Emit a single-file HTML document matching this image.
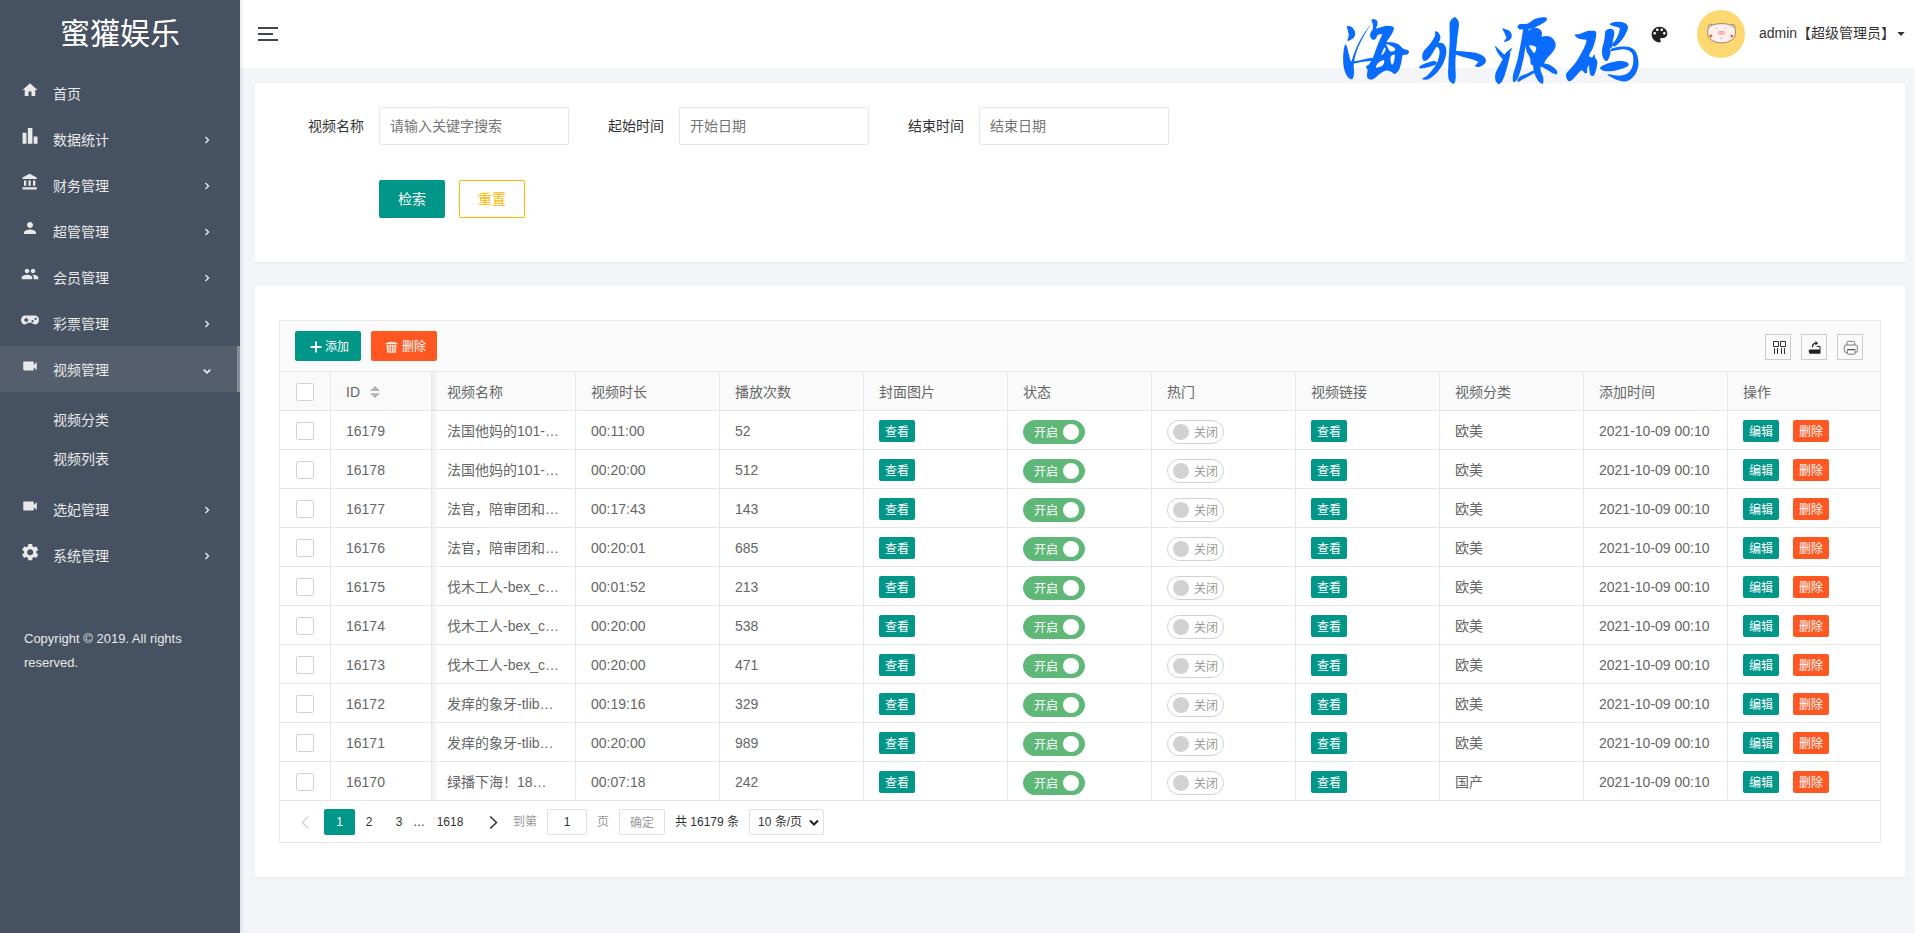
<!DOCTYPE html><html lang="zh-CN"><head><meta charset="utf-8"><title>视频列表</title><style>
*{box-sizing:border-box}
html,body{margin:0;padding:0}
body{width:1915px;height:933px;overflow:hidden;background:#f4f5f9;font-family:"Liberation Sans",sans-serif;font-size:14px;color:#333;position:relative}
.abs{position:absolute}
#side{position:absolute;left:0;top:0;width:240px;height:933px;background:#465161;color:#e9e9e9;box-shadow:1px 0 4px rgba(0,0,0,.12);z-index:2}
#logo{position:absolute;left:0;top:12px;width:240px;height:44px;line-height:44px;text-align:center;font-size:30px;color:#fff}
.mi{position:absolute;left:0;width:240px;height:46px;line-height:46px;font-size:14px}
.mi.on{background:#555e6d;border-right:3px solid #878e9a}
.mi .ic{position:absolute;left:21px;top:11px;width:18px;height:18px;fill:#e9e9e9}
.mi .tx{position:absolute;left:53px;top:1px}
.mi .ar{position:absolute;left:203px;top:20px;width:8px;height:8px}
.sub{position:absolute;left:53px;height:39px;line-height:39px;font-size:14px}
#copy{position:absolute;left:24px;top:627px;font-size:13px;line-height:24px;width:200px;color:#e9e9e9}
#head{position:absolute;left:240px;top:0;width:1675px;height:68px;background:#fff}
.card{position:absolute;left:255px;width:1650px;background:#fff;box-shadow:0 1px 2px rgba(0,0,0,.06)}
.lbl{position:absolute;top:107px;width:100px;height:38px;line-height:38px;text-align:right;color:#333}
.inp{position:absolute;top:107px;width:190px;height:38px;line-height:36px;border:1px solid #e6e6e6;border-radius:2px;padding-left:10px;color:#757575;background:#fff}
.btn{position:absolute;height:38px;line-height:39px;text-align:center;border-radius:2px;font-size:14px}

.tb{position:absolute;top:331px;width:66px;height:30px;line-height:30px;border-radius:2px;color:#fff;font-size:12px}
.tool{position:absolute;top:334px;width:26px;height:26px;border:1px solid #ccc;background:#fafafa}
.th{position:absolute;top:372px;height:38px;line-height:40px;color:#666;font-size:14px;white-space:nowrap}
.cb{position:absolute;left:296px;width:18px;height:18px;border:1px solid #d2d2d2;border-radius:2px;background:#fff}
.tr{position:absolute;left:279px;width:1602px;height:39px;border-bottom:1px solid #e8e8e8;color:#666}
.td{position:absolute;top:0;height:38px;line-height:40px;white-space:nowrap}
.bd{position:absolute;top:9px;width:36px;height:22px;line-height:25px;text-align:center;background:#009688;color:#fff;font-size:12px;border-radius:2px}
.sw{position:absolute;top:9px;height:24px;border-radius:12px;font-size:12px;line-height:24px}
.sw i{font-style:normal;position:absolute;top:0}
.sw b{position:absolute;top:3px;width:16px;height:16px;border-radius:8px}
.sw.on{width:62px;background:#5fb878;border:1px solid #5fb878;color:#fff}
.sw.on i{left:10px}.sw.on b{left:39px;background:#fff}
.sw.off{width:57px;background:#fff;border:1px solid #d2d2d2;color:#999}
.sw.off i{left:26px}.sw.off b{left:5px;background:#d2d2d2}
.pg{position:absolute;top:809px;height:26px;line-height:26px;font-size:12px;text-align:center;color:#333;white-space:nowrap}
.pg.bx{border:1px solid #e2e2e2;border-radius:2px;line-height:24px;background:#fff}
</style></head><body>
<div id="side"><div id="logo">蜜獾娱乐</div>
<div class="mi" style="top:70px"><svg class="ic" viewBox="0 0 24 24"><path d="M10 20v-6h4v6h5v-8h3L12 3 2 12h3v8z"/></svg><span class="tx">首页</span></div>
<div class="mi" style="top:116px"><svg class="ic" viewBox="0 0 24 24"><path d="M2.100 7.600h5.200v14.700H2.100zM9.100 1.300h6.100v21H9.100zM16.900 12.700H22v9.600h-5.100z"/></svg><span class="tx">数据统计</span><svg class="ar" viewBox="0 0 8 8"><path d="M2.500 1l3 3-3 3" fill="none" stroke="#e9e9e9" stroke-width="1.400"/></svg></div>
<div class="mi" style="top:162px"><svg class="ic" viewBox="0 0 24 24"><path d="M4 10v7h3v-7H4zm6 0v7h3v-7h-3zM2 22h19v-3H2v3zm14-12v7h3v-7h-3zm-4.500-9L2 6v2h19V6l-9.500-5z"/></svg><span class="tx">财务管理</span><svg class="ar" viewBox="0 0 8 8"><path d="M2.500 1l3 3-3 3" fill="none" stroke="#e9e9e9" stroke-width="1.400"/></svg></div>
<div class="mi" style="top:208px"><svg class="ic" viewBox="0 0 24 24"><path d="M12 12c2.210 0 4-1.790 4-4s-1.790-4-4-4-4 1.790-4 4 1.790 4 4 4zm0 2c-2.670 0-8 1.340-8 4v2h16v-2c0-2.660-5.330-4-8-4z"/></svg><span class="tx">超管管理</span><svg class="ar" viewBox="0 0 8 8"><path d="M2.500 1l3 3-3 3" fill="none" stroke="#e9e9e9" stroke-width="1.400"/></svg></div>
<div class="mi" style="top:254px"><svg class="ic" viewBox="0 0 24 24"><path d="M16 11c1.660 0 2.990-1.340 2.990-3S17.660 5 16 5c-1.660 0-3 1.340-3 3s1.340 3 3 3zm-8 0c1.660 0 2.990-1.340 2.990-3S9.660 5 8 5C6.340 5 5 6.340 5 8s1.340 3 3 3zm0 2c-2.330 0-7 1.170-7 3.500V19h14v-2.500c0-2.330-4.670-3.500-7-3.500zm8 0c-.290 0-.620.020-.970.050 1.160.840 1.970 1.970 1.970 3.450V19h6v-2.500c0-2.330-4.670-3.500-7-3.500z"/></svg><span class="tx">会员管理</span><svg class="ar" viewBox="0 0 8 8"><path d="M2.500 1l3 3-3 3" fill="none" stroke="#e9e9e9" stroke-width="1.400"/></svg></div>
<div class="mi" style="top:300px"><svg class="ic" viewBox="0 0 24 24"><path fill-rule="evenodd" d="M5.500 6h13c3 0 5.500 2.600 5.500 6s-2.300 6-5 6c-1.800 0-3.200-.900-4.100-2.200h-5.800C8.200 17.100 6.800 18 5 18c-2.700 0-5-2.600-5-6s2.500-6 5.500-6zM6 9v2H4v2h2v2h2v-2h2v-2H8V9zm9.500 3a1.500 1.500 0 1 0 0 3 1.500 1.500 0 0 0 0-3zm4-3a1.500 1.500 0 1 0 0 3 1.500 1.500 0 0 0 0-3z"/></svg><span class="tx">彩票管理</span><svg class="ar" viewBox="0 0 8 8"><path d="M2.500 1l3 3-3 3" fill="none" stroke="#e9e9e9" stroke-width="1.400"/></svg></div>
<div class="mi on" style="top:346px"><svg class="ic" viewBox="0 0 24 24"><path d="M17 10.500V7c0-.550-.450-1-1-1H4c-.550 0-1 .450-1 1v10c0 .550.450 1 1 1h12c.550 0 1-.450 1-1v-3.500l4 4v-11l-4 4z"/></svg><span class="tx">视频管理</span><svg class="ar" viewBox="0 0 8 8" style="top:20.500px"><path d="M.700 2.600l3.300 3.200 3.300-3.200" fill="none" stroke="#efefef" stroke-width="1.600"/></svg></div>
<div class="mi" style="top:486px"><svg class="ic" viewBox="0 0 24 24"><path d="M17 10.500V7c0-.550-.450-1-1-1H4c-.550 0-1 .450-1 1v10c0 .550.450 1 1 1h12c.550 0 1-.450 1-1v-3.500l4 4v-11l-4 4z"/></svg><span class="tx">选妃管理</span><svg class="ar" viewBox="0 0 8 8"><path d="M2.500 1l3 3-3 3" fill="none" stroke="#e9e9e9" stroke-width="1.400"/></svg></div>
<div class="mi" style="top:532px"><svg class="ic" style="left:19.800px;top:10.100px;width:20.400px;height:20.400px" viewBox="0 0 24 24"><path d="M19.140 12.940c.040-.300.060-.610.060-.940 0-.320-.020-.640-.070-.940l2.030-1.580c.180-.140.230-.410.120-.610l-1.920-3.320c-.120-.220-.370-.290-.590-.220l-2.390.960c-.500-.380-1.030-.700-1.620-.940l-.360-2.540c-.040-.240-.240-.410-.480-.410h-3.840c-.240 0-.430.170-.470.410l-.360 2.540c-.590.240-1.130.570-1.620.940l-2.390-.960c-.220-.080-.470 0-.590.220L2.740 8.870c-.120.210-.080.470.120.610l2.030 1.580c-.050.300-.090.630-.090.940s.020.640.070.940l-2.030 1.580c-.180.140-.230.410-.120.610l1.920 3.320c.120.220.370.290.590.220l2.390-.960c.500.380 1.030.700 1.620.940l.360 2.540c.050.240.240.410.480.410h3.840c.240 0 .440-.170.470-.410l.360-2.540c.590-.240 1.130-.560 1.620-.940l2.390.960c.220.080.470 0 .590-.220l1.920-3.320c.120-.220.070-.470-.120-.610l-2.010-1.580zM12 15.600c-1.980 0-3.600-1.620-3.600-3.600s1.620-3.600 3.600-3.600 3.600 1.620 3.600 3.600-1.620 3.600-3.600 3.600z"/></svg><span class="tx">系统管理</span><svg class="ar" viewBox="0 0 8 8"><path d="M2.500 1l3 3-3 3" fill="none" stroke="#e9e9e9" stroke-width="1.400"/></svg></div>
<div class="sub" style="top:401px">视频分类</div><div class="sub" style="top:440px">视频列表</div>
<div id="copy">Copyright © 2019. All rights<br>reserved.</div></div>
<div id="head">
<svg class="abs" style="left:18px;top:26px" width="20" height="16" viewBox="0 0 20 16"><path d="M0 2h20M0 8h15M0 14h20" stroke="#3f4652" stroke-width="2" fill="none"/></svg>
<svg class="abs" style="left:1409px;top:24px" width="21" height="21" viewBox="0 0 24 24"><path fill="#222" d="M12 3c-4.970 0-9 4.030-9 9s4.030 9 9 9c.830 0 1.500-.670 1.500-1.500 0-.390-.150-.740-.390-1.010-.230-.260-.380-.610-.380-.990 0-.830.670-1.500 1.500-1.500H16c2.760 0 5-2.240 5-5 0-4.420-4.030-8-9-8zm-5.500 9c-.830 0-1.500-.670-1.500-1.500S5.670 9 6.500 9 8 9.670 8 10.500 7.330 12 6.500 12zm3-4C8.670 8 8 7.330 8 6.500S8.670 5 9.500 5s1.500.670 1.500 1.500S10.330 8 9.500 8zm5 0c-.830 0-1.500-.670-1.500-1.500S13.670 5 14.500 5s1.500.670 1.500 1.500S15.330 8 14.500 8zm3 4c-.830 0-1.500-.670-1.500-1.500S16.670 9 17.500 9s1.500.670 1.500 1.500-.670 1.500-1.500 1.500z"/></svg>
<svg class="abs" style="left:1457px;top:10px" width="48" height="48" viewBox="0 0 48 48"><circle cx="24" cy="24" r="24" fill="#fdd76f"/><circle cx="13.300" cy="16.400" r="2.100" fill="#fcdcd8" stroke="#5c4a3c" stroke-width=".500"/><circle cx="36" cy="16.400" r="2.100" fill="#fcdcd8" stroke="#5c4a3c" stroke-width=".500"/><path d="M10.600 22.500C10.400 16.500 14 14 24.600 13.600 35 14 38.700 16.500 38.500 22.500 38.500 29.500 32 32.800 24.600 32.800 17 32.800 10.600 29.500 10.600 22.500Z" fill="#fcefed" stroke="#5c4a3c" stroke-width=".600"/><rect x="20.800" y="20.900" width="7.200" height="4" rx="2" fill="#f7b9b7"/><path d="M22.300 21.300h4.200" stroke="#c99" stroke-width=".500"/><circle cx="19.400" cy="18" r=".450" fill="#6b5a4a"/><circle cx="28.400" cy="18" r=".450" fill="#6b5a4a"/><circle cx="13.900" cy="26" r="1.450" fill="#ff5a2c"/><circle cx="34.800" cy="26.100" r="1.450" fill="#ff5a2c"/><path d="M23.800 27.600q.800 .300 .500 1.700" fill="none" stroke="#6b5a4a" stroke-width=".500"/></svg>
<div class="abs" style="left:1519px;top:19px;height:28px;line-height:28px;font-size:14px;color:#333;white-space:nowrap">admin【超级管理员】</div>
<svg class="abs" style="left:1657px;top:32px" width="8" height="4" viewBox="0 0 8 4"><path d="M.300 0h7.400L4 4z" fill="#333"/></svg>
</div>
<div class="card" style="top:83px;height:179px"></div>
<div class="lbl" style="left:264px">视频名称</div><div class="inp" style="left:379px">请输入关键字搜索</div>
<div class="lbl" style="left:564px">起始时间</div><div class="inp" style="left:679px">开始日期</div>
<div class="lbl" style="left:864px">结束时间</div><div class="inp" style="left:979px">结束日期</div>
<div class="btn" style="left:379px;top:180px;width:66px;background:#009688;color:#fff">检索</div>
<div class="btn" style="left:459px;top:180px;width:66px;border:1px solid #ffb800;color:#ffb800;line-height:37px;background:#fff">重置</div>
<div class="card" style="top:286px;height:591px"></div>
<div class="abs" style="left:279px;top:320px;width:1602px;height:523px;border:1px solid #e8e8e8;background:#fff"></div>
<div class="abs" style="left:280px;top:321px;width:1600px;height:51px;background:#fafafa;border-bottom:1px solid #e8e8e8"></div>
<div class="abs" style="left:280px;top:372px;width:1600px;height:39px;background:#fafafa;border-bottom:1px solid #e8e8e8"></div>
<div class="tb" style="left:295px;background:#009688"><svg width="12" height="12" viewBox="0 0 12 12" style="position:absolute;left:15px;top:10px"><path d="M6 .500v11M.500 6h11" stroke="#fff" stroke-width="1.800"/></svg><span style="position:absolute;left:30px;top:1px">添加</span></div>
<div class="tb" style="left:371px;background:#ff5722"><svg width="13" height="12" viewBox="0 0 13 12" style="position:absolute;left:14px;top:10px"><path d="M.300 3.300Q.300 1.800 3 1.300 6.500 .100 10 1.300 12.700 1.800 12.700 3.300z" fill="#ffe4d6"/><path d="M1.500 4h10l-.700 7.700H2.200z" fill="#ffe4d6"/><path d="M4.100 4.800v5.900M6.500 4.800v5.900M8.900 4.800v5.900" stroke="#ff5722" stroke-width=".800"/></svg><span style="position:absolute;left:31px;top:1px">删除</span></div>
<div class="tool" style="left:1765px"><svg width="24" height="24" viewBox="0 0 24 24" style="position:absolute;left:0;top:0"><path d="M7.500 6.500h5v5h-5zM14.500 6.500h5v5h-5z" fill="none" stroke="#333" stroke-width="1"/><path d="M8.500 13v6M11.500 13v6M15.500 13v6M18.500 13v6" stroke="#333" stroke-width="1"/></svg></div>
<div class="tool" style="left:1801px"><svg width="24" height="24" viewBox="0 0 24 24" style="position:absolute;left:0;top:0"><path d="M6.500 15.200l1.600-.800h8.800l1.600.600v3.800H7.500z" fill="#222"/><path d="M14.600 11.400H18V15" fill="none" stroke="#222" stroke-width="1"/><path d="M10.500 12.300Q10.400 8.400 13.800 8.200" fill="none" stroke="#222" stroke-width="1.300"/><path d="M13.300 6l2.800 2.200-2.800 2.200z" fill="#222"/></svg></div>
<div class="tool" style="left:1837px"><svg width="24" height="24" viewBox="0 0 24 24" style="position:absolute;left:0;top:0"><path d="M8.900 10V7.700c0-.800.600-1.400 1.400-1.400h5c.800 0 1.400.600 1.400 1.400V10" fill="none" stroke="#777" stroke-width="1"/><rect x="6.300" y="10" width="13.100" height="7.600" rx="2.200" fill="none" stroke="#777" stroke-width="1"/><path d="M8.600 10.500h8.600" stroke="#bbb" stroke-width="1"/><rect x="9.300" y="14.600" width="7.900" height="4.600" rx="1" fill="#fafafa" stroke="#777" stroke-width="1"/><path d="M9.300 14.600h7.900" stroke="#555" stroke-width="1.200"/></svg></div>
<div class="abs" style="left:330px;top:372px;width:1px;height:429px;background:#e8e8e8"></div>
<div class="abs" style="left:431px;top:372px;width:1px;height:429px;background:#e8e8e8"></div>
<div class="abs" style="left:575px;top:372px;width:1px;height:429px;background:#e8e8e8"></div>
<div class="abs" style="left:719px;top:372px;width:1px;height:429px;background:#e8e8e8"></div>
<div class="abs" style="left:863px;top:372px;width:1px;height:429px;background:#e8e8e8"></div>
<div class="abs" style="left:1007px;top:372px;width:1px;height:429px;background:#e8e8e8"></div>
<div class="abs" style="left:1151px;top:372px;width:1px;height:429px;background:#e8e8e8"></div>
<div class="abs" style="left:1295px;top:372px;width:1px;height:429px;background:#e8e8e8"></div>
<div class="abs" style="left:1439px;top:372px;width:1px;height:429px;background:#e8e8e8"></div>
<div class="abs" style="left:1583px;top:372px;width:1px;height:429px;background:#e8e8e8"></div>
<div class="abs" style="left:1727px;top:372px;width:1px;height:429px;background:#e8e8e8"></div>
<div class="abs" style="left:432px;top:372px;width:7px;height:429px;background:linear-gradient(90deg,rgba(0,0,0,.055),rgba(0,0,0,0))"></div>
<div class="th" style="left:346px">ID</div>
<div class="th" style="left:447px">视频名称</div>
<div class="th" style="left:591px">视频时长</div>
<div class="th" style="left:735px">播放次数</div>
<div class="th" style="left:879px">封面图片</div>
<div class="th" style="left:1023px">状态</div>
<div class="th" style="left:1167px">热门</div>
<div class="th" style="left:1311px">视频链接</div>
<div class="th" style="left:1455px">视频分类</div>
<div class="th" style="left:1599px">添加时间</div>
<div class="th" style="left:1743px">操作</div>
<svg class="abs" style="left:370px;top:386px" width="10" height="12" viewBox="0 0 10 12"><path d="M0 5l5-5 5 5zM0 7.300l5 4.700 5-4.700z" fill="#b2b2b2"/></svg>
<div class="cb" style="top:383px"></div>
<div class="tr" style="top:411px"><div class="cb" style="left:17px;top:11px"></div><span class="td" style="left:67px">16179</span><span class="td" style="left:168px">法国他妈的101-…</span><span class="td" style="left:312px">00:11:00</span><span class="td" style="left:456px">52</span><span class="bd" style="left:600px">查看</span><span class="sw on" style="left:744px"><i>开启</i><b></b></span><span class="sw off" style="left:888px"><b></b><i>关闭</i></span><span class="bd" style="left:1032px">查看</span><span class="td" style="left:1176px">欧美</span><span class="td" style="left:1320px">2021-10-09 00:10</span><span class="bd" style="left:1464px">编辑</span><span class="bd" style="left:1514px;background:#ff5722">删除</span></div>
<div class="tr" style="top:450px"><div class="cb" style="left:17px;top:11px"></div><span class="td" style="left:67px">16178</span><span class="td" style="left:168px">法国他妈的101-…</span><span class="td" style="left:312px">00:20:00</span><span class="td" style="left:456px">512</span><span class="bd" style="left:600px">查看</span><span class="sw on" style="left:744px"><i>开启</i><b></b></span><span class="sw off" style="left:888px"><b></b><i>关闭</i></span><span class="bd" style="left:1032px">查看</span><span class="td" style="left:1176px">欧美</span><span class="td" style="left:1320px">2021-10-09 00:10</span><span class="bd" style="left:1464px">编辑</span><span class="bd" style="left:1514px;background:#ff5722">删除</span></div>
<div class="tr" style="top:489px"><div class="cb" style="left:17px;top:11px"></div><span class="td" style="left:67px">16177</span><span class="td" style="left:168px">法官，陪审团和…</span><span class="td" style="left:312px">00:17:43</span><span class="td" style="left:456px">143</span><span class="bd" style="left:600px">查看</span><span class="sw on" style="left:744px"><i>开启</i><b></b></span><span class="sw off" style="left:888px"><b></b><i>关闭</i></span><span class="bd" style="left:1032px">查看</span><span class="td" style="left:1176px">欧美</span><span class="td" style="left:1320px">2021-10-09 00:10</span><span class="bd" style="left:1464px">编辑</span><span class="bd" style="left:1514px;background:#ff5722">删除</span></div>
<div class="tr" style="top:528px"><div class="cb" style="left:17px;top:11px"></div><span class="td" style="left:67px">16176</span><span class="td" style="left:168px">法官，陪审团和…</span><span class="td" style="left:312px">00:20:01</span><span class="td" style="left:456px">685</span><span class="bd" style="left:600px">查看</span><span class="sw on" style="left:744px"><i>开启</i><b></b></span><span class="sw off" style="left:888px"><b></b><i>关闭</i></span><span class="bd" style="left:1032px">查看</span><span class="td" style="left:1176px">欧美</span><span class="td" style="left:1320px">2021-10-09 00:10</span><span class="bd" style="left:1464px">编辑</span><span class="bd" style="left:1514px;background:#ff5722">删除</span></div>
<div class="tr" style="top:567px"><div class="cb" style="left:17px;top:11px"></div><span class="td" style="left:67px">16175</span><span class="td" style="left:168px">伐木工人-bex_c…</span><span class="td" style="left:312px">00:01:52</span><span class="td" style="left:456px">213</span><span class="bd" style="left:600px">查看</span><span class="sw on" style="left:744px"><i>开启</i><b></b></span><span class="sw off" style="left:888px"><b></b><i>关闭</i></span><span class="bd" style="left:1032px">查看</span><span class="td" style="left:1176px">欧美</span><span class="td" style="left:1320px">2021-10-09 00:10</span><span class="bd" style="left:1464px">编辑</span><span class="bd" style="left:1514px;background:#ff5722">删除</span></div>
<div class="tr" style="top:606px"><div class="cb" style="left:17px;top:11px"></div><span class="td" style="left:67px">16174</span><span class="td" style="left:168px">伐木工人-bex_c…</span><span class="td" style="left:312px">00:20:00</span><span class="td" style="left:456px">538</span><span class="bd" style="left:600px">查看</span><span class="sw on" style="left:744px"><i>开启</i><b></b></span><span class="sw off" style="left:888px"><b></b><i>关闭</i></span><span class="bd" style="left:1032px">查看</span><span class="td" style="left:1176px">欧美</span><span class="td" style="left:1320px">2021-10-09 00:10</span><span class="bd" style="left:1464px">编辑</span><span class="bd" style="left:1514px;background:#ff5722">删除</span></div>
<div class="tr" style="top:645px"><div class="cb" style="left:17px;top:11px"></div><span class="td" style="left:67px">16173</span><span class="td" style="left:168px">伐木工人-bex_c…</span><span class="td" style="left:312px">00:20:00</span><span class="td" style="left:456px">471</span><span class="bd" style="left:600px">查看</span><span class="sw on" style="left:744px"><i>开启</i><b></b></span><span class="sw off" style="left:888px"><b></b><i>关闭</i></span><span class="bd" style="left:1032px">查看</span><span class="td" style="left:1176px">欧美</span><span class="td" style="left:1320px">2021-10-09 00:10</span><span class="bd" style="left:1464px">编辑</span><span class="bd" style="left:1514px;background:#ff5722">删除</span></div>
<div class="tr" style="top:684px"><div class="cb" style="left:17px;top:11px"></div><span class="td" style="left:67px">16172</span><span class="td" style="left:168px">发痒的象牙-tlib…</span><span class="td" style="left:312px">00:19:16</span><span class="td" style="left:456px">329</span><span class="bd" style="left:600px">查看</span><span class="sw on" style="left:744px"><i>开启</i><b></b></span><span class="sw off" style="left:888px"><b></b><i>关闭</i></span><span class="bd" style="left:1032px">查看</span><span class="td" style="left:1176px">欧美</span><span class="td" style="left:1320px">2021-10-09 00:10</span><span class="bd" style="left:1464px">编辑</span><span class="bd" style="left:1514px;background:#ff5722">删除</span></div>
<div class="tr" style="top:723px"><div class="cb" style="left:17px;top:11px"></div><span class="td" style="left:67px">16171</span><span class="td" style="left:168px">发痒的象牙-tlib…</span><span class="td" style="left:312px">00:20:00</span><span class="td" style="left:456px">989</span><span class="bd" style="left:600px">查看</span><span class="sw on" style="left:744px"><i>开启</i><b></b></span><span class="sw off" style="left:888px"><b></b><i>关闭</i></span><span class="bd" style="left:1032px">查看</span><span class="td" style="left:1176px">欧美</span><span class="td" style="left:1320px">2021-10-09 00:10</span><span class="bd" style="left:1464px">编辑</span><span class="bd" style="left:1514px;background:#ff5722">删除</span></div>
<div class="tr" style="top:762px"><div class="cb" style="left:17px;top:11px"></div><span class="td" style="left:67px">16170</span><span class="td" style="left:168px">绿播下海！18…</span><span class="td" style="left:312px">00:07:18</span><span class="td" style="left:456px">242</span><span class="bd" style="left:600px">查看</span><span class="sw on" style="left:744px"><i>开启</i><b></b></span><span class="sw off" style="left:888px"><b></b><i>关闭</i></span><span class="bd" style="left:1032px">查看</span><span class="td" style="left:1176px">国产</span><span class="td" style="left:1320px">2021-10-09 00:10</span><span class="bd" style="left:1464px">编辑</span><span class="bd" style="left:1514px;background:#ff5722">删除</span></div>
<svg class="abs" style="left:301px;top:815.500px" width="9" height="13" viewBox="0 0 9 13"><path d="M7.500 .500L1.200 6.500l6.300 6" fill="none" stroke="#d2d2d2" stroke-width="1.300"/></svg>
<div class="pg" style="left:324px;width:31px;background:#009688;color:#fff;border-radius:2px">1</div>
<div class="pg" style="left:349px;width:40px">2</div>
<div class="pg" style="left:379px;width:40px">3</div>
<div class="pg" style="left:399px;width:40px">…</div>
<div class="pg" style="left:430px;width:40px">1618</div>
<svg class="abs" style="left:489px;top:815.500px" width="9" height="13" viewBox="0 0 9 13"><path d="M1.200 .500l6.300 6-6.300 6" fill="none" stroke="#333" stroke-width="1.500"/></svg>
<div class="pg" style="left:513px;color:#999;text-align:left">到第</div>
<div class="pg bx" style="left:547px;width:40px">1</div>
<div class="pg" style="left:597px;color:#999;text-align:left">页</div>
<div class="pg bx" style="left:619px;width:46px;color:#999;line-height:26px">确定</div>
<div class="pg" style="left:675px;text-align:left">共 16179 条</div>
<div class="pg bx" style="left:749px;width:75px;text-align:left;padding-left:8px">10 条/页<svg style="position:absolute;left:59px;top:9px" width="10" height="8" viewBox="0 0 10 8"><path d="M1 1.500l4 4 4-4" fill="none" stroke="#222" stroke-width="2"/></svg></div>
<svg class="abs" style="left:1330px;top:0" width="330" height="100" viewBox="1330 0 330 100"><g fill="#0a6cff"><path d="M1353.6 63.6L1354.6 63.4L1356.0 63.1L1357.6 62.8L1359.3 62.5L1361.0 62.1L1362.6 61.9L1364.3 61.6L1366.1 61.4L1367.9 61.2L1369.6 61.0L1371.1 60.8L1372.1 60.7L1373.2 59.0L1371.6 57.8L1370.6 58.0L1369.2 58.3L1367.5 58.6L1365.7 59.0L1363.9 59.3L1362.2 59.7L1360.6 60.0L1358.9 60.4L1357.1 60.7L1355.5 61.1L1354.2 61.3L1353.2 61.6L1352.5 62.7Z"/><path d="M1347.0 26.3C1347.6 25.6 1350.1 26.1 1351.3 26.7C1352.5 27.4 1353.6 28.9 1354.3 30.2C1354.9 31.4 1355.3 33.2 1355.2 34.4C1355.0 35.7 1354.3 36.9 1353.4 37.9C1352.6 38.8 1351.0 39.7 1350.0 40.2C1349.0 40.6 1347.6 41.4 1347.4 40.6C1347.2 39.9 1348.6 37.4 1348.7 35.7C1348.8 34.1 1348.1 32.2 1347.9 30.6C1347.6 29.0 1346.4 26.9 1347.0 26.3Z"/><path d="M1345.3 44.3C1344.7 45.0 1343.9 48.6 1343.6 51.2C1343.2 53.7 1343.1 56.9 1343.1 59.7C1343.2 62.6 1343.4 65.7 1344.0 68.3C1344.6 70.9 1345.5 73.4 1346.6 75.2C1347.6 77.0 1349.3 78.6 1350.4 79.0C1351.5 79.5 1352.6 79.0 1353.2 77.7C1353.8 76.5 1353.9 74.1 1354.0 71.7C1354.1 69.4 1353.4 66.7 1353.8 63.6C1354.1 60.4 1355.2 56.1 1356.2 52.9C1357.2 49.7 1358.3 47.2 1359.6 44.3C1360.9 41.4 1362.3 38.6 1363.9 35.7C1365.5 32.9 1367.6 29.5 1369.2 27.1C1370.8 24.8 1373.0 22.1 1373.3 21.6C1373.7 21.1 1372.4 23.0 1371.4 24.1C1370.5 25.3 1369.1 26.4 1367.6 28.4C1366.1 30.4 1363.9 33.4 1362.3 36.2C1360.6 38.9 1359.1 41.9 1357.7 44.7C1356.4 47.5 1355.2 50.4 1354.3 52.9C1353.4 55.3 1352.7 57.9 1352.1 59.3C1351.6 60.7 1351.4 62.1 1350.9 61.2C1350.3 60.3 1349.4 56.1 1348.7 53.7C1348.1 51.3 1347.6 48.4 1347.0 46.9C1346.4 45.3 1345.9 43.6 1345.3 44.3Z"/><path d="M1373.2 19.0C1374.1 18.9 1376.3 19.7 1377.0 20.7C1377.7 21.7 1377.6 23.7 1377.4 25.0C1377.3 26.3 1375.5 28.1 1376.2 28.4C1376.8 28.8 1379.6 27.6 1381.3 27.1C1383.0 26.7 1384.9 25.9 1386.4 25.7C1388.0 25.5 1389.5 25.8 1390.7 26.1C1392.0 26.5 1393.6 26.8 1393.9 27.8C1394.2 28.9 1393.4 30.7 1392.6 32.5C1391.8 34.2 1390.0 36.7 1389.0 38.3C1388.1 39.9 1386.2 41.2 1386.9 41.9C1387.6 42.6 1391.4 42.0 1393.3 42.4C1395.2 42.8 1396.9 43.3 1398.5 44.3C1400.0 45.3 1401.2 47.2 1402.7 48.2C1404.3 49.2 1406.9 49.6 1407.9 50.3C1408.9 51.0 1409.1 51.7 1408.9 52.4C1408.8 53.2 1408.1 54.1 1407.0 54.6C1406.0 55.1 1403.7 54.3 1402.7 55.4C1401.8 56.6 1402.0 59.2 1401.5 61.4C1400.9 63.7 1400.2 67.2 1399.3 69.2C1398.5 71.1 1397.2 72.2 1396.3 73.0C1395.5 73.8 1395.0 74.1 1394.2 73.9C1393.3 73.7 1392.4 72.3 1391.2 71.7C1389.9 71.2 1388.4 70.1 1386.4 70.5C1384.5 70.8 1381.4 72.7 1379.6 73.9C1377.7 75.1 1376.7 76.8 1375.3 77.7C1373.9 78.7 1372.7 79.5 1371.4 79.6C1370.2 79.8 1368.8 79.3 1368.0 78.6C1367.3 77.9 1367.0 76.6 1366.9 75.2C1366.8 73.7 1367.7 71.5 1367.6 70.0C1367.4 68.5 1365.8 67.1 1366.0 66.2C1366.3 65.2 1367.8 65.8 1368.9 64.4C1370.0 63.1 1371.7 60.2 1372.7 58.0C1373.8 55.8 1374.4 53.4 1375.3 51.2C1376.2 48.9 1376.9 46.7 1377.9 44.3C1378.9 41.9 1380.6 38.2 1381.3 36.6C1382.0 34.9 1382.7 34.7 1382.2 34.4C1381.6 34.2 1378.9 34.3 1377.9 35.0C1376.8 35.8 1376.6 37.9 1375.7 38.7C1374.9 39.5 1373.6 40.2 1372.7 39.8C1371.8 39.5 1370.7 37.9 1370.3 36.8C1370.0 35.6 1370.2 34.0 1370.6 32.7C1371.0 31.5 1372.4 30.8 1372.7 29.3C1373.1 27.8 1372.9 25.1 1372.7 23.7C1372.5 22.4 1371.4 21.9 1371.4 21.1C1371.5 20.4 1372.2 19.1 1373.2 19.0Z"/><path d="M1435.0 32.6L1435.0 33.3L1435.1 34.1L1435.1 35.0L1435.0 35.8L1434.8 36.3L1434.5 36.8L1434.1 37.5L1433.5 38.6L1432.7 39.9L1431.8 41.4L1430.8 42.8L1429.9 44.1L1428.9 45.3L1427.8 46.5L1426.6 47.7L1425.5 48.9L1424.4 50.1L1423.5 51.5L1422.9 52.9L1422.5 54.3L1422.3 55.5L1422.2 56.6L1422.2 57.4L1422.2 58.0L1423.8 61.3L1427.3 60.1L1427.7 59.6L1428.3 58.9L1428.9 58.2L1429.6 57.5L1430.2 56.7L1430.8 56.0L1431.4 55.0L1432.1 53.9L1433.0 52.5L1433.8 51.0L1434.7 49.4L1435.6 47.9L1436.5 46.4L1437.4 44.8L1438.3 43.2L1439.2 41.6L1439.9 39.9L1440.4 38.1L1440.3 36.3L1439.8 34.7L1439.1 33.5L1438.3 32.6L1437.7 32.1L1437.4 31.7L1435.7 31.0Z"/><path d="M1435.4 46.0L1436.0 46.4L1436.9 46.9L1437.9 47.4L1438.6 48.0L1439.0 48.5L1439.0 48.8L1439.0 49.0L1439.1 49.4L1439.3 50.0L1439.5 50.7L1439.6 51.6L1439.6 52.6L1439.5 53.8L1439.2 55.4L1438.9 57.0L1438.4 58.7L1437.9 60.4L1437.3 61.9L1436.6 63.3L1435.9 64.7L1435.0 66.1L1434.1 67.5L1433.2 68.8L1432.2 70.0L1431.3 71.2L1430.3 72.3L1429.3 73.4L1428.3 74.4L1427.4 75.2L1426.6 75.9L1426.0 76.5L1425.3 76.9L1424.6 77.3L1423.9 77.6L1423.3 77.9L1422.8 78.1L1422.3 78.9L1423.0 79.4L1423.5 79.5L1424.1 79.6L1425.0 79.8L1426.1 79.8L1427.3 79.6L1428.5 79.2L1429.8 78.5L1431.0 77.8L1432.3 76.8L1433.6 75.8L1434.9 74.6L1436.1 73.4L1437.3 72.2L1438.5 70.8L1439.6 69.3L1440.7 67.8L1441.8 66.1L1442.7 64.4L1443.6 62.6L1444.3 60.7L1445.0 58.8L1445.6 56.8L1446.0 54.9L1446.3 53.2L1446.4 51.5L1446.3 49.9L1446.1 48.3L1445.6 46.8L1444.9 45.5L1443.8 44.1L1442.2 43.1L1440.5 42.7L1439.1 42.7L1437.8 42.8L1436.8 42.9L1436.1 43.0L1434.4 44.1Z"/><path d="M1420.5 68.5L1421.3 68.4L1422.4 68.3L1423.7 68.1L1425.1 67.9L1426.5 67.6L1427.8 67.3L1429.2 67.0L1430.7 66.5L1432.2 66.0L1433.6 65.5L1434.8 65.1L1435.7 64.8L1436.9 62.2L1434.4 60.7L1433.5 60.9L1432.3 61.2L1430.9 61.6L1429.3 62.0L1427.8 62.5L1426.5 62.9L1425.2 63.4L1423.9 64.0L1422.6 64.6L1421.4 65.2L1420.5 65.7L1419.7 66.0L1419.0 67.6Z"/><path d="M1451.2 19.6L1451.0 19.9L1450.7 20.4L1450.3 20.9L1450.0 21.7L1449.7 22.8L1449.5 24.3L1449.5 26.2L1449.5 28.5L1449.6 31.0L1449.7 33.8L1449.7 36.7L1449.7 39.8L1449.6 43.1L1449.4 46.7L1449.2 50.5L1449.0 54.3L1448.7 58.0L1448.6 61.3L1448.4 64.4L1448.3 67.4L1448.1 70.2L1448.1 72.8L1448.1 75.1L1448.3 77.2L1448.6 78.9L1449.3 80.4L1450.0 81.5L1450.7 82.2L1451.2 82.6L1451.5 82.9L1454.0 83.9L1455.2 81.5L1455.3 80.9L1455.3 80.2L1455.4 79.5L1455.6 78.8L1455.7 77.9L1455.8 76.6L1455.7 74.8L1455.7 72.6L1455.5 70.2L1455.4 67.5L1455.4 64.6L1455.4 61.6L1455.6 58.3L1455.8 54.7L1456.1 51.0L1456.4 47.2L1456.8 43.5L1457.1 40.2L1457.4 37.2L1457.8 34.2L1458.2 31.5L1458.5 28.9L1458.8 26.7L1459.0 24.9L1458.9 23.4L1458.8 22.4L1458.6 21.6L1458.4 21.0L1458.1 20.6L1458.0 20.1L1454.8 16.8Z"/><path d="M1455.1 54.5L1456.2 54.8L1457.7 55.2L1459.5 55.8L1461.4 56.4L1463.4 56.9L1465.2 57.5L1467.0 57.9L1468.8 58.4L1470.5 58.9L1472.1 59.3L1473.6 59.8L1474.8 60.2L1476.0 60.7L1477.2 61.3L1478.3 61.8L1479.0 62.3L1479.3 62.4L1479.0 61.5L1479.2 60.1L1479.4 60.1L1479.1 60.7L1478.5 61.5L1477.8 62.4L1477.3 63.0L1477.1 63.5L1476.9 63.8L1476.6 64.1L1476.3 64.4L1475.9 64.7L1475.5 64.9L1474.9 65.9L1475.8 66.6L1476.1 66.7L1476.5 66.8L1477.2 67.0L1478.0 67.1L1478.9 67.0L1479.9 66.7L1480.8 66.3L1481.9 65.8L1483.1 65.1L1484.4 64.1L1485.6 62.5L1485.9 59.7L1484.8 57.4L1483.4 56.2L1482.0 55.2L1480.4 54.5L1478.8 53.8L1477.2 53.2L1475.5 52.8L1473.6 52.5L1471.7 52.2L1469.9 52.0L1468.0 51.9L1466.3 51.7L1464.4 51.5L1462.4 51.3L1460.4 51.2L1458.5 51.0L1456.9 50.9L1455.8 50.8L1453.8 52.3Z"/><path d="M1502.4 29.1L1502.8 29.8L1503.4 30.9L1504.0 32.1L1504.6 33.3L1505.1 34.4L1505.3 35.1L1505.4 35.5L1505.6 35.9L1505.8 36.2L1506.0 36.3L1506.1 36.5L1506.3 36.6L1506.4 37.0L1506.2 37.8L1505.7 38.7L1505.1 39.7L1504.5 40.5L1504.2 41.2L1504.1 41.9L1504.8 41.9L1505.5 41.7L1506.4 41.4L1507.6 41.0L1508.8 40.4L1509.9 39.7L1510.9 38.6L1511.5 37.4L1511.7 36.1L1511.7 34.9L1511.4 33.7L1510.9 32.6L1510.2 31.6L1509.1 30.7L1507.8 30.0L1506.4 29.4L1505.0 28.9L1503.9 28.6L1503.1 28.3L1502.4 28.4Z"/><path d="M1495.0 46.8L1495.3 47.4L1495.7 48.4L1496.1 49.5L1496.6 50.7L1497.2 51.9L1497.8 53.1L1498.6 54.2L1499.4 55.3L1500.3 56.4L1501.1 57.5L1501.8 58.3L1502.3 58.9L1505.3 58.9L1505.6 55.9L1505.0 55.4L1504.3 54.6L1503.3 53.7L1502.3 52.7L1501.4 51.8L1500.5 51.0L1499.7 50.1L1498.8 49.3L1497.9 48.4L1497.0 47.5L1496.3 46.8L1495.8 46.3L1495.2 46.2Z"/><path d="M1505.3 58.5L1505.8 57.9L1506.5 57.0L1507.3 56.0L1508.1 54.9L1508.9 53.8L1509.6 52.9L1510.1 52.0L1510.6 51.2L1511.1 50.4L1511.5 49.6L1511.9 49.0L1512.1 48.6L1512.1 48.1L1511.6 48.1L1511.2 48.4L1510.6 48.8L1509.9 49.3L1509.2 49.9L1508.4 50.5L1507.6 51.2L1506.8 52.0L1505.9 52.9L1504.9 53.9L1504.0 54.9L1503.2 55.7L1502.7 56.3L1503.0 58.6Z"/><path d="M1506.8 52.2L1506.1 53.4L1505.1 55.1L1503.9 57.2L1502.6 59.4L1501.4 61.6L1500.4 63.5L1499.4 65.2L1498.5 67.0L1497.6 68.7L1496.7 70.4L1496.0 72.1L1495.4 73.8L1495.1 75.6L1495.1 77.2L1495.2 78.6L1495.4 79.8L1495.6 80.7L1495.8 81.3L1498.5 84.4L1501.9 82.0L1502.2 81.3L1502.5 80.5L1503.0 79.5L1503.4 78.5L1503.9 77.5L1504.3 76.5L1504.7 75.2L1505.2 73.7L1505.7 72.0L1506.3 70.2L1506.8 68.2L1507.4 66.3L1508.0 64.1L1508.5 61.7L1509.1 59.3L1509.7 57.0L1510.1 55.0L1510.4 53.6L1509.3 51.2Z"/><path d="M1519.5 29.5L1520.4 29.5L1521.7 29.6L1523.4 29.6L1525.2 29.7L1527.1 29.6L1529.1 29.3L1530.9 28.8L1532.7 28.2L1534.4 27.5L1536.0 26.8L1537.4 26.2L1538.6 25.6L1539.9 24.9L1541.4 24.1L1542.8 23.2L1544.2 22.4L1545.3 21.6L1546.2 21.1L1547.3 18.4L1544.8 17.1L1543.8 17.2L1542.4 17.3L1540.8 17.5L1539.1 17.8L1537.3 18.2L1535.5 18.7L1533.9 19.5L1532.4 20.5L1531.0 21.5L1529.8 22.4L1528.7 23.1L1527.6 23.6L1526.4 23.9L1525.0 24.1L1523.5 24.1L1522.0 24.0L1520.6 24.0L1519.6 24.0L1517.1 26.7Z"/><path d="M1523.2 29.1L1523.0 30.7L1522.6 32.8L1522.2 35.4L1521.7 38.2L1521.2 41.1L1520.7 43.8L1520.2 46.6L1519.6 49.5L1519.0 52.4L1518.4 55.3L1517.8 58.2L1517.2 60.8L1516.5 63.3L1515.8 65.8L1515.0 68.2L1514.3 70.4L1513.7 72.5L1513.2 74.3L1512.9 75.9L1512.8 77.2L1512.7 78.4L1512.8 79.3L1512.8 80.1L1512.8 80.7L1513.7 82.3L1515.4 81.6L1515.8 81.1L1516.2 80.5L1516.8 79.7L1517.5 78.7L1518.1 77.5L1518.8 76.0L1519.4 74.2L1520.0 72.2L1520.7 69.9L1521.4 67.4L1522.0 64.8L1522.7 62.1L1523.3 59.4L1523.9 56.4L1524.4 53.5L1524.9 50.5L1525.5 47.5L1526.0 44.8L1526.5 42.0L1527.0 39.1L1527.5 36.3L1528.0 33.7L1528.4 31.6L1528.6 30.0L1526.3 27.1Z"/><path d="M1532.4 31.9L1533.1 32.3L1534.0 32.7L1535.0 33.3L1535.8 33.8L1536.3 34.1L1536.2 34.0L1536.1 33.7L1536.2 34.1L1536.3 34.8L1536.2 35.6L1536.1 36.5L1536.1 37.2L1538.1 39.7L1540.8 38.0L1541.0 37.5L1541.3 36.8L1541.6 35.7L1541.9 34.4L1542.0 32.8L1541.3 30.9L1540.0 29.5L1538.7 28.7L1537.3 28.1L1536.1 27.7L1535.1 27.4L1534.5 27.2L1531.4 28.6Z"/><path d="M1540.3 40.7L1541.3 40.8L1542.7 41.0L1544.2 41.2L1545.7 41.4L1546.9 41.7L1547.6 42.0L1548.1 42.3L1548.7 42.8L1549.4 43.4L1549.9 44.0L1550.2 44.5L1550.4 44.9L1550.4 45.2L1550.4 45.6L1550.1 46.3L1549.7 47.1L1549.2 48.0L1548.5 49.0L1547.7 50.0L1546.7 51.1L1545.4 52.4L1544.1 53.7L1542.9 55.1L1541.8 56.6L1541.0 58.2L1540.4 59.7L1540.0 61.2L1539.7 62.5L1539.5 63.5L1539.3 64.2L1540.8 66.7L1543.4 65.5L1543.7 64.8L1544.1 63.7L1544.5 62.6L1545.0 61.5L1545.5 60.4L1546.1 59.4L1546.9 58.4L1547.9 57.3L1549.1 56.0L1550.4 54.7L1551.7 53.3L1552.7 52.0L1553.5 50.8L1554.2 49.6L1554.9 48.4L1555.4 47.1L1555.7 45.6L1555.6 44.0L1555.3 42.5L1554.6 41.1L1553.8 39.7L1552.7 38.5L1551.4 37.5L1549.9 36.6L1548.0 36.2L1546.1 36.1L1544.3 36.2L1542.6 36.5L1541.3 36.6L1540.4 36.8L1538.6 38.7Z"/><path d="M1525.8 38.3L1525.7 39.0L1525.6 39.9L1525.5 41.0L1525.5 42.3L1525.6 43.6L1525.9 45.0L1526.4 46.3L1527.0 47.5L1527.7 48.7L1528.4 49.8L1529.0 50.8L1529.7 51.8L1530.4 52.9L1531.2 54.0L1532.0 55.2L1532.8 56.3L1533.5 57.2L1534.0 57.8L1537.4 58.2L1538.1 54.8L1537.7 54.1L1537.0 53.2L1536.3 52.2L1535.5 51.0L1534.6 49.9L1533.8 48.8L1533.0 47.8L1532.1 46.8L1531.3 45.9L1530.5 45.1L1529.9 44.3L1529.4 43.6L1529.1 42.9L1528.8 41.9L1528.6 40.9L1528.5 39.8L1528.4 38.9L1528.3 38.2L1527.0 37.1Z"/><path d="M1528.2 45.1L1528.9 45.3L1529.9 45.4L1531.1 45.5L1532.3 45.7L1533.6 46.0L1534.9 46.2L1536.2 46.6L1537.7 47.1L1539.2 47.6L1540.6 48.1L1542.0 48.5L1543.1 48.9L1544.1 49.2L1544.9 49.5L1545.7 49.7L1546.3 49.9L1546.9 50.0L1547.4 50.2L1549.5 49.2L1548.7 47.0L1548.4 46.8L1547.9 46.5L1547.2 46.1L1546.4 45.6L1545.5 45.2L1544.4 44.8L1543.1 44.5L1541.7 44.2L1540.1 43.9L1538.5 43.7L1536.9 43.4L1535.5 43.2L1534.1 43.0L1532.7 42.9L1531.4 42.8L1530.2 42.7L1529.2 42.6L1528.5 42.6L1527.2 43.7Z"/><path d="M1532.8 57.9L1532.8 59.2L1532.9 61.1L1532.9 63.4L1533.1 65.8L1533.3 68.3L1533.6 70.6L1534.1 72.6L1534.8 74.5L1535.5 76.1L1536.2 77.6L1536.9 78.8L1537.5 79.8L1538.1 80.7L1538.8 81.5L1539.5 82.2L1540.2 82.8L1540.7 83.2L1541.1 83.5L1542.6 84.0L1543.3 82.6L1543.3 82.0L1543.4 81.4L1543.4 80.5L1543.4 79.6L1543.4 78.6L1543.2 77.4L1542.8 76.1L1542.2 74.8L1541.7 73.4L1541.2 72.1L1540.8 70.8L1540.5 69.5L1540.5 67.9L1540.6 65.8L1540.8 63.6L1541.0 61.4L1541.2 59.5L1541.4 58.1L1537.2 54.2Z"/><path d="M1541.4 66.7L1542.1 67.1L1543.1 67.6L1544.3 68.3L1545.5 68.9L1546.6 69.5L1547.6 70.1L1548.5 70.7L1549.6 71.3L1550.7 72.0L1551.7 72.7L1552.6 73.2L1553.4 73.6L1553.8 73.8L1554.0 73.7L1554.2 73.6L1554.5 73.6L1554.7 73.9L1555.0 74.1L1556.2 74.7L1556.9 73.5L1557.0 73.4L1557.2 73.2L1557.4 72.6L1557.3 71.8L1557.0 71.0L1556.5 70.2L1555.8 69.4L1554.9 68.5L1553.9 67.6L1552.7 66.7L1551.5 65.9L1550.3 65.1L1548.9 64.5L1547.4 64.1L1546.0 63.7L1544.6 63.4L1543.5 63.2L1542.7 63.0L1540.4 64.3Z"/><path d="M1532.8 70.7L1532.1 71.1L1531.2 71.5L1530.2 72.1L1529.0 72.7L1527.8 73.3L1526.8 73.8L1525.8 74.2L1524.7 74.6L1523.6 74.9L1522.5 75.3L1521.5 75.8L1520.5 76.3L1519.6 77.0L1518.9 77.7L1518.3 78.4L1517.9 79.0L1517.6 79.6L1517.3 79.9L1517.4 81.6L1519.1 81.7L1519.5 81.5L1520.0 81.1L1520.6 80.7L1521.2 80.3L1521.8 79.9L1522.5 79.5L1523.2 79.1L1524.0 78.7L1525.0 78.2L1526.0 77.7L1527.1 77.1L1528.2 76.6L1529.2 75.9L1530.4 75.3L1531.5 74.6L1532.6 74.0L1533.5 73.5L1534.1 73.1L1534.6 71.3Z"/><path d="M1528.8 30.2C1529.8 29.0 1531.8 29.2 1533.5 29.0C1535.2 28.9 1537.8 28.6 1539.0 29.3C1540.3 30.0 1541.0 31.8 1541.2 33.2C1541.4 34.5 1539.2 36.9 1540.2 37.6C1541.2 38.4 1545.2 37.1 1547.2 37.6C1549.2 38.2 1551.2 39.6 1552.3 40.9C1553.5 42.1 1554.2 43.6 1554.2 45.2C1554.2 46.7 1553.5 48.6 1552.3 50.3C1551.2 52.0 1548.7 53.9 1547.2 55.4C1545.7 57.0 1544.1 58.2 1543.3 59.7C1542.5 61.3 1544.4 64.0 1542.5 64.9C1540.5 65.7 1533.8 66.0 1531.8 64.9C1529.7 63.7 1530.9 60.3 1530.0 58.0C1529.2 55.7 1527.3 53.4 1526.6 51.2C1525.9 48.9 1525.7 46.9 1525.8 44.3C1525.8 41.7 1526.5 38.1 1527.0 35.7C1527.5 33.4 1527.7 31.3 1528.8 30.2Z"/><path d="M1575.0 34.4C1575.6 33.9 1578.0 34.3 1579.6 33.9C1581.2 33.4 1582.9 32.4 1584.6 31.9C1586.3 31.3 1588.3 30.9 1590.1 30.8C1591.8 30.7 1594.0 30.6 1595.1 31.1C1596.1 31.7 1596.2 32.4 1596.3 33.9C1596.3 35.4 1595.9 37.7 1595.3 40.1C1594.8 42.5 1593.8 45.7 1592.8 48.3C1591.8 50.8 1589.3 54.0 1589.2 55.6C1589.0 57.1 1591.2 57.6 1592.1 57.4C1592.9 57.1 1593.9 54.2 1594.4 54.2C1594.9 54.2 1594.6 56.2 1595.1 57.4C1595.5 58.5 1596.9 59.5 1597.2 61.0C1597.5 62.5 1597.2 64.5 1596.9 66.5C1596.5 68.5 1595.7 71.3 1595.1 72.9C1594.5 74.4 1594.0 75.4 1593.3 75.8C1592.5 76.2 1591.2 76.1 1590.5 75.1C1589.9 74.2 1589.6 71.7 1589.3 70.1C1589.1 68.5 1589.3 65.9 1589.0 65.6C1588.6 65.3 1587.7 67.1 1587.3 68.3C1587.0 69.5 1587.3 72.1 1586.9 72.9C1586.4 73.6 1585.5 73.3 1584.6 72.9C1583.7 72.4 1582.8 69.9 1581.4 70.3C1580.0 70.8 1578.0 74.0 1576.4 75.6C1574.8 77.2 1573.1 79.2 1571.8 80.2C1570.6 81.1 1569.5 81.5 1568.7 81.2C1567.8 80.9 1567.0 79.6 1566.6 78.3C1566.1 77.1 1565.6 75.3 1566.2 73.8C1566.8 72.3 1568.5 71.0 1570.0 69.2C1571.6 67.4 1573.8 65.1 1575.5 62.8C1577.2 60.6 1578.6 58.0 1580.0 55.6C1581.4 53.1 1582.8 50.7 1583.9 48.3C1584.9 45.8 1586.4 42.4 1586.4 41.0C1586.4 39.5 1585.0 39.9 1583.9 39.6C1582.7 39.3 1580.9 39.4 1579.6 39.0C1578.3 38.6 1577.0 37.9 1576.2 37.1C1575.5 36.4 1574.5 35.0 1575.0 34.4Z"/><path d="M1610.1 23.7C1610.7 23.1 1612.8 22.3 1614.7 22.0C1616.5 21.8 1619.1 21.7 1621.0 22.0C1622.9 22.3 1624.9 23.0 1626.1 23.8C1627.2 24.7 1627.7 25.7 1627.9 26.9C1628.0 28.0 1627.6 29.4 1627.0 31.0C1626.4 32.5 1625.4 34.6 1624.2 36.4C1623.1 38.2 1621.7 40.2 1620.1 41.9C1618.5 43.6 1616.0 46.0 1614.7 46.4C1613.3 46.9 1612.0 45.7 1612.1 44.6C1612.3 43.6 1614.5 41.7 1615.6 40.1C1616.6 38.4 1617.6 36.3 1618.3 34.6C1619.0 32.9 1619.5 30.7 1619.7 29.6C1619.8 28.4 1620.1 28.3 1619.2 27.8C1618.4 27.2 1616.0 26.8 1614.7 26.4C1613.3 26.0 1611.8 25.8 1611.0 25.3C1610.3 24.8 1609.5 24.2 1610.1 23.7Z"/><path d="M1607.4 29.6C1608.4 29.1 1610.0 28.5 1611.0 28.7C1612.1 28.8 1613.2 29.4 1613.8 30.5C1614.3 31.6 1614.4 33.3 1614.2 35.1C1614.1 36.8 1613.1 39.1 1612.8 41.0C1612.5 42.9 1612.9 45.1 1612.4 46.4C1611.9 47.8 1610.0 48.3 1609.7 49.2C1609.3 50.1 1610.6 50.5 1610.6 51.9C1610.5 53.3 1609.8 55.9 1609.2 57.4C1608.6 58.9 1607.8 60.6 1606.9 61.0C1606.1 61.4 1604.9 60.6 1604.2 59.7C1603.4 58.7 1602.7 57.3 1602.4 55.6C1602.0 53.8 1601.9 51.3 1602.1 49.2C1602.3 47.0 1603.3 44.9 1603.7 42.8C1604.2 40.7 1604.6 38.2 1604.8 36.4C1605.1 34.6 1604.7 33.0 1605.1 31.9C1605.5 30.7 1606.4 30.1 1607.4 29.6Z"/><path d="M1612.4 48.3C1613.8 47.6 1616.1 47.2 1618.3 46.9C1620.5 46.6 1623.3 46.4 1625.6 46.6C1627.9 46.9 1630.2 47.3 1632.0 48.3C1633.7 49.2 1635.0 50.5 1636.1 52.4C1637.1 54.2 1637.8 56.8 1638.2 59.2C1638.5 61.5 1638.6 64.1 1638.2 66.5C1637.7 68.9 1636.8 71.7 1635.6 73.8C1634.4 75.8 1632.7 77.5 1631.1 78.8C1629.4 80.1 1627.6 81.2 1625.6 81.5C1623.6 81.8 1621.3 81.2 1619.2 80.6C1617.1 80.0 1614.8 78.8 1612.8 77.9C1610.9 77.0 1607.9 75.7 1607.4 75.1C1606.8 74.5 1608.1 74.2 1609.7 74.2C1611.2 74.3 1614.1 75.4 1616.5 75.6C1618.8 75.7 1621.6 75.7 1623.8 75.1C1625.9 74.5 1627.8 73.4 1629.2 72.0C1630.7 70.5 1631.7 68.6 1632.4 66.5C1633.1 64.4 1633.4 61.4 1633.3 59.2C1633.3 57.0 1633.0 54.8 1632.0 53.3C1631.0 51.8 1629.2 50.7 1627.4 50.1C1625.6 49.4 1623.2 49.3 1621.0 49.4C1618.9 49.4 1616.5 50.3 1614.7 50.5C1612.8 50.8 1610.5 51.4 1610.1 51.0C1609.7 50.6 1611.0 48.9 1612.4 48.3Z"/><path d="M1600.1 67.4C1600.8 66.5 1603.4 65.1 1605.6 64.2C1607.7 63.3 1610.4 62.6 1612.8 62.1C1615.3 61.6 1617.9 61.0 1620.1 61.0C1622.4 61.0 1625.1 61.5 1626.5 62.1C1627.9 62.7 1628.8 63.7 1628.8 64.5C1628.8 65.3 1627.9 66.2 1626.5 66.9C1625.1 67.7 1622.4 68.6 1620.1 69.2C1617.9 69.9 1615.3 70.5 1612.8 70.9C1610.4 71.2 1607.4 71.4 1605.6 71.2C1603.7 71.0 1602.4 70.3 1601.5 69.7C1600.5 69.0 1599.4 68.3 1600.1 67.4Z"/></g><path fill="#fff" d="M1384.3 47.7C1385.0 46.8 1385.7 48.1 1385.6 49.0C1385.5 49.9 1384.6 52.3 1383.9 53.3C1383.2 54.3 1381.2 55.7 1381.3 54.8C1381.4 53.8 1383.6 48.7 1384.3 47.7ZM1386.4 44.3C1386.8 43.9 1388.6 44.6 1389.9 45.2C1391.2 45.7 1393.3 46.9 1394.2 47.7C1395.0 48.6 1395.6 49.7 1395.0 50.3C1394.4 50.9 1391.9 52.0 1390.7 51.6C1389.5 51.2 1388.4 48.9 1387.7 47.7C1387.0 46.5 1386.1 44.7 1386.4 44.3ZM1383.0 60.2C1384.1 59.9 1384.4 60.5 1384.3 61.4C1384.2 62.4 1383.5 64.7 1382.2 65.7C1380.8 66.8 1376.9 68.0 1376.2 67.6C1375.4 67.2 1376.7 64.4 1377.9 63.2C1379.0 61.9 1381.9 60.4 1383.0 60.2ZM1390.7 56.7C1391.3 55.2 1394.0 53.9 1394.6 54.6C1395.2 55.2 1394.4 59.0 1394.2 60.6C1393.9 62.2 1393.4 63.7 1392.9 64.2C1392.4 64.7 1391.5 64.8 1391.2 63.6C1390.8 62.3 1390.2 58.2 1390.7 56.7ZM1529.4 45.3C1530.1 44.8 1535.2 45.8 1536.0 47.0C1536.9 48.3 1535.2 52.5 1534.5 53.0C1533.8 53.6 1532.6 51.6 1531.8 50.3C1530.9 49.0 1528.6 45.9 1529.4 45.3Z"/></svg>
</body></html>
